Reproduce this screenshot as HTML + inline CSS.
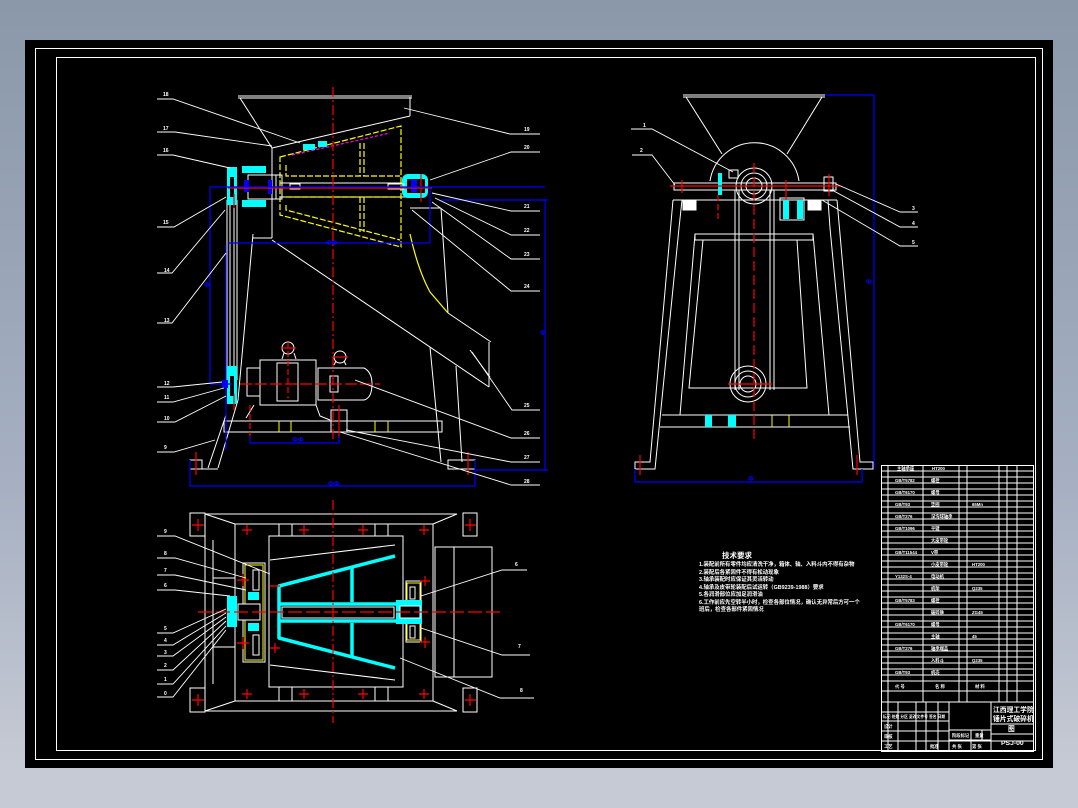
<!DOCTYPE html>
<html><head><meta charset="utf-8"><style>
html,body{margin:0;padding:0;width:1078px;height:808px;overflow:hidden;background:linear-gradient(#8a98aa,#a6b0c2 60%,#c6cad4 95%);}
svg{position:absolute;left:0;top:0}
text{font-family:"Liberation Sans","Noto Sans CJK SC",sans-serif;fill:#fff;font-weight:bold}
</style></head><body>
<svg width="1078" height="808" viewBox="0 0 1078 808">
<rect x="25" y="40" width="1028" height="728" fill="#000"/>
<g fill="none" stroke="#fff" stroke-width="1">
<rect x="35.5" y="48.5" width="1007" height="711"/>
<rect x="56.5" y="57.5" width="979" height="693"/>
</g>

<!-- FRONT VIEW -->
<g fill="none" stroke="#fff" stroke-width="1">
<line x1="238" y1="96" x2="412" y2="96"/><line x1="238" y1="98" x2="412" y2="98"/>
<line x1="240" y1="98" x2="272" y2="148"/>
<line x1="410" y1="97" x2="410" y2="116"/>
<line x1="272" y1="148" x2="410" y2="116"/>
<line x1="272" y1="148" x2="272" y2="238"/>
<line x1="272" y1="238" x2="253" y2="238"/>
<line x1="253" y1="234" x2="238" y2="400"/>
<line x1="238" y1="400" x2="218" y2="468"/>
<line x1="226" y1="415" x2="208" y2="468"/>
<line x1="227" y1="200" x2="227" y2="380"/>
<line x1="230" y1="200" x2="230" y2="380"/>
<line x1="234" y1="200" x2="234" y2="380"/>
<line x1="237" y1="200" x2="237" y2="380"/>
<line x1="272" y1="240" x2="489" y2="387"/>
<line x1="489" y1="342" x2="489" y2="387"/>
<line x1="448" y1="313" x2="491" y2="342"/>
<line x1="441" y1="208" x2="448" y2="313"/>
<line x1="410" y1="208" x2="441" y2="208"/>
<line x1="430" y1="347" x2="441" y2="462"/>
<line x1="456" y1="366" x2="462" y2="462"/>
<line x1="470" y1="350" x2="490" y2="377"/>
<line x1="280" y1="183" x2="410" y2="183"/>
<line x1="280" y1="197" x2="410" y2="197"/>
<rect x="224" y="421" width="218" height="11"/>
<rect x="260" y="360" width="56" height="45"/>
<rect x="277" y="363" width="21" height="38"/>
<rect x="247" y="368" width="13" height="28"/>
<path d="M318 368 H364 Q372 372 372 384 Q372 398 364 400 H318 Z"/>
<rect x="330" y="376" width="8" height="16"/>
<circle cx="288" cy="348" r="6"/><circle cx="340" cy="357" r="6"/>
<path d="M282 359 L284 353 M294 353 L296 359 M334 365 L336 361 M344 361 L346 365"/>
<path d="M254 405 L246 418 M316 405 L320 416 L330 420"/>
<rect x="190" y="460" width="12" height="9"/>
<rect x="448" y="460" width="27" height="9"/>
<line x1="202" y1="469" x2="218" y2="469"/>
<rect x="331" y="410" width="16" height="22"/>
</g>
<g fill="none" stroke="#ff0" stroke-width="1.2" stroke-dasharray="6,2">
<path d="M280 157 L401 126 L401 247 L280 215 Z"/>
<path d="M286 165 L286 176 L400 176 M286 205 L286 210 L400 240 M286 197 L400 197"/>
<line x1="360" y1="143" x2="360" y2="176"/><line x1="364" y1="143" x2="364" y2="176"/>
<line x1="360" y1="197" x2="360" y2="232"/><line x1="364" y1="197" x2="364" y2="232"/>
<path d="M410 234 Q418 270 430 292 L448 313" stroke-dasharray="none"/>
</g>
<g stroke="#ff0" stroke-width="1"><line x1="279" y1="421" x2="279" y2="432"/><line x1="291" y1="421" x2="291" y2="432"/><line x1="375" y1="421" x2="375" y2="432"/><line x1="388" y1="421" x2="388" y2="432"/></g>
<g fill="#0ff">
<rect x="227" y="167" width="10" height="38"/>
<rect x="242" y="166" width="24" height="7"/><rect x="242" y="200" width="24" height="7"/>
<rect x="402" y="174" width="26" height="24" rx="6"/>
<rect x="227" y="366" width="10" height="38"/>
<rect x="303" y="144" width="12" height="6"/><rect x="318" y="141" width="9" height="6"/>
</g>
<g fill="#000"><rect x="407" y="179" width="18" height="14"/><rect x="230" y="177" width="4" height="20"/><rect x="230" y="376" width="4" height="20"/><rect x="248" y="175" width="14" height="23"/></g>
<g fill="none" stroke="#fff"><rect x="248" y="175" width="28" height="24"/><rect x="276" y="175" width="6" height="24"/><rect x="290" y="184" width="10" height="5"/><rect x="388" y="184" width="16" height="5"/></g>
<g fill="none" stroke="#f0f" stroke-width="1.2" stroke-dasharray="3,2"><line x1="292" y1="155" x2="390" y2="133"/></g>
<g fill="#00f"><rect x="244" y="180" width="5" height="12"/><rect x="268" y="180" width="4" height="14"/><rect x="411" y="180" width="6" height="12"/><rect x="222" y="380" width="6" height="8"/></g>
<g stroke="#f00" stroke-width="1.2">
<line x1="228" y1="188" x2="432" y2="188"/>
<line x1="333" y1="87" x2="333" y2="442" stroke-dasharray="10,3,2,3"/>
<line x1="240" y1="384" x2="380" y2="384" stroke-dasharray="12,3"/>
<line x1="234" y1="194" x2="234" y2="208"/><line x1="234" y1="394" x2="234" y2="410"/>
<line x1="421" y1="174" x2="421" y2="202"/>
<line x1="288" y1="342" x2="288" y2="398" stroke-dasharray="6,3"/>
<line x1="281" y1="348" x2="296" y2="348"/><line x1="333" y1="357" x2="348" y2="357"/>
<line x1="250" y1="405" x2="250" y2="440" stroke-dasharray="6,3"/>
<line x1="339" y1="405" x2="339" y2="438"/>
<line x1="196" y1="452" x2="196" y2="475"/><line x1="468" y1="452" x2="468" y2="475"/>
</g>
<g fill="none" stroke="#00f" stroke-width="1.2">
<line x1="210" y1="187" x2="545" y2="187"/>
<line x1="210" y1="187" x2="210" y2="384"/>
<line x1="210" y1="384" x2="232" y2="384"/>
<line x1="228" y1="243" x2="430" y2="243"/>
<line x1="430" y1="187" x2="430" y2="243"/>
<line x1="441" y1="200" x2="548" y2="200"/>
<line x1="545" y1="200" x2="545" y2="470"/>
<line x1="475" y1="470" x2="548" y2="470"/>
<line x1="226" y1="245" x2="226" y2="450"/>
<path d="M190 460 V486 H475 V460"/>
<path d="M250 436 V443 H339 V436"/>
</g>
<g font-size="7"><text x="326" y="245" style="fill:#00f">ΦΦ</text><text x="204" y="287" style="fill:#00f">Φ</text><text x="328" y="486" style="fill:#00f">ΦΦ</text><text x="292" y="442" style="fill:#00f">ΦΦ</text><text x="540" y="335" style="fill:#00f">Φ</text><text x="866" y="284" style="fill:#00f">Φ</text><text x="748" y="481" style="fill:#00f">Φ</text></g>
<g fill="none" stroke="#fff" stroke-width="0.9">
<path d="M157 99 H173 L300 143"/>
<path d="M157 132 H175 L272 146"/>
<path d="M157 155 H173 L230 168"/>
<path d="M157 227 H174 L226 197"/>
<path d="M157 273 H172 L225 210"/>
<path d="M157 323 H172 L226 253"/>
<path d="M157 387 H173 L222 382"/>
<path d="M157 402 H173 L224 388"/>
<path d="M157 422 H175 L226 396"/>
<path d="M157 452 H174 L215 440"/>
<path d="M404 108 L510 134 H540"/>
<path d="M430 180 L511 152 H540"/>
<path d="M432 193 L511 211 H540"/>
<path d="M435 198 L511 235 H540"/>
<path d="M432 202 L511 259 H540"/>
<path d="M412 210 L511 291 H540"/>
<path d="M472 352 L512 410 H540"/>
<path d="M355 380 L511 438 H540"/>
<path d="M346 430 L511 462 H540"/>
<path d="M340 432 L511 485 H540"/>
</g>
<g font-size="5">
<text x="163" y="96">18</text><text x="163" y="130">17</text><text x="163" y="152">16</text><text x="163" y="224">15</text><text x="164" y="272">14</text><text x="164" y="322">13</text><text x="164" y="385">12</text><text x="164" y="399">11</text><text x="164" y="420">10</text><text x="164" y="449">9</text>
<text x="524" y="131">19</text><text x="524" y="149">20</text><text x="524" y="208">21</text><text x="524" y="232">22</text><text x="524" y="256">23</text><text x="524" y="288">24</text><text x="524" y="407">25</text><text x="524" y="435">26</text><text x="524" y="459">27</text><text x="524" y="483">28</text>
</g>

<!-- SIDE VIEW -->
<g fill="none" stroke="#fff" stroke-width="1">
<line x1="683" y1="95" x2="825" y2="95"/><line x1="683" y1="97" x2="825" y2="97"/>
<line x1="686" y1="97" x2="722" y2="154"/><line x1="822" y1="97" x2="787" y2="154"/>
<path d="M710 181 A45 45 0 0 1 799 181"/>
<rect x="674" y="183" width="162" height="7"/>
<line x1="673" y1="200" x2="837" y2="200"/>
<path d="M673 200 L650 462 L635 462 L635 469 L655 469 L679 228 L682 200"/>
<path d="M837 200 L860 462 L873 462 L873 469 L853 469 L830 228 L828 200"/>
<path d="M695 234 H813 V240 H695 Z"/>
<path d="M695 234 L680 415 M703 240 L689 388 H807 L797 240 M813 234 L829 415"/>
<line x1="735" y1="190" x2="735" y2="390"/><line x1="739" y1="190" x2="739" y2="390"/>
<line x1="770" y1="190" x2="770" y2="390"/><line x1="774" y1="190" x2="774" y2="390"/>
<line x1="662" y1="415" x2="848" y2="415"/><line x1="660" y1="427" x2="850" y2="427"/>
<circle cx="754" cy="186" r="18"/><circle cx="754" cy="186" r="13"/><circle cx="754" cy="186" r="8"/>
<circle cx="748" cy="384" r="18"/><circle cx="748" cy="384" r="13"/><circle cx="748" cy="384" r="8"/>
<rect x="683" y="201" width="13" height="9" fill="#fff"/><rect x="808" y="201" width="13" height="9" fill="#fff"/>
<rect x="729" y="170" width="9" height="8"/><rect x="824" y="177" width="9" height="14"/>
<rect x="780" y="198" width="24" height="22"/>
</g>
<g fill="#0ff"><rect x="705" y="415" width="7" height="12"/><rect x="728" y="415" width="8" height="12"/><rect x="783" y="200" width="6" height="19"/><rect x="797" y="200" width="6" height="19"/><rect x="718" y="173" width="4" height="22"/></g>
<g stroke="#ff0"><line x1="772" y1="415" x2="772" y2="427"/><line x1="789" y1="415" x2="789" y2="427"/></g>
<g stroke="#f00" stroke-width="1.2">
<line x1="754" y1="163" x2="754" y2="440" stroke-dasharray="10,4"/>
<line x1="670" y1="186" x2="840" y2="186"/>
<line x1="728" y1="384" x2="772" y2="384"/>
<line x1="682" y1="180" x2="682" y2="193"/><line x1="718" y1="195" x2="718" y2="222" stroke-dasharray="6,3"/>
<line x1="786" y1="180" x2="786" y2="200"/><line x1="829" y1="174" x2="829" y2="196"/>
<line x1="640" y1="455" x2="640" y2="475"/><line x1="857" y1="455" x2="857" y2="475"/>
</g>
<g stroke="#00f" stroke-width="1.2" fill="none"><path d="M825 95 H874 V468"/><path d="M635 469 V482 H862 V469"/></g>
<g fill="none" stroke="#fff" stroke-width="0.9">
<path d="M631 129 H652 L733 172"/><path d="M632 155 H652 L675 185"/>
<path d="M836 184 L900 212 H918"/><path d="M832 190 L900 227 H918"/><path d="M822 200 L900 246 H918"/>
</g>
<g font-size="5"><text x="643" y="127">1</text><text x="640" y="152">2</text><text x="912" y="210">3</text><text x="912" y="225">4</text><text x="912" y="244">5</text></g>

<!-- TOP VIEW -->
<g fill="none" stroke="#fff" stroke-width="1">
<rect x="190" y="513" width="15" height="23"/><rect x="463" y="513" width="14" height="23"/>
<rect x="190" y="688" width="15" height="24"/><rect x="463" y="688" width="14" height="24"/>
<line x1="205" y1="514" x2="457" y2="514"/><line x1="205" y1="711" x2="457" y2="711"/>
<rect x="235" y="524" width="198" height="177"/>
<rect x="269" y="536" width="134" height="151"/>
<line x1="205" y1="536" x2="205" y2="688"/><line x1="213" y1="540" x2="213" y2="684"/>
<line x1="213" y1="578" x2="235" y2="578"/><line x1="213" y1="647" x2="235" y2="647"/>
<line x1="205" y1="514" x2="235" y2="524"/><line x1="457" y1="514" x2="433" y2="524"/>
<line x1="205" y1="711" x2="235" y2="701"/><line x1="457" y1="711" x2="433" y2="701"/>
<line x1="279" y1="524" x2="279" y2="536"/><line x1="292" y1="524" x2="292" y2="536"/><line x1="375" y1="524" x2="375" y2="536"/><line x1="388" y1="524" x2="388" y2="536"/>
<line x1="279" y1="687" x2="279" y2="701"/><line x1="292" y1="687" x2="292" y2="701"/><line x1="375" y1="687" x2="375" y2="701"/><line x1="388" y1="687" x2="388" y2="701"/>
<rect x="435" y="547" width="57" height="130"/><line x1="454" y1="547" x2="454" y2="677"/>
<rect x="243" y="563" width="22" height="99"/>
<rect x="406" y="581" width="15" height="61"/>
<line x1="270" y1="560" x2="395" y2="545"/><line x1="270" y1="665" x2="395" y2="680"/>
</g>
<g fill="none" stroke="#ff0"><rect x="245" y="565" width="18" height="95"/><rect x="407" y="583" width="13" height="57"/></g>
<g fill="none" stroke="#0ff" stroke-width="3.5" stroke-linejoin="round">
<path d="M395 556 L279 586 L279 638 L395 668"/>
<line x1="352" y1="567" x2="352" y2="602"/><line x1="352" y1="623" x2="352" y2="657"/>
<line x1="279" y1="604" x2="396" y2="604"/><line x1="279" y1="621" x2="396" y2="621"/>
</g>
<g fill="#0ff"><rect x="227" y="596" width="10" height="31"/><rect x="248" y="592" width="11" height="8"/><rect x="248" y="623" width="11" height="8"/><rect x="396" y="600" width="26" height="24"/></g>
<g fill="#000" stroke="#fff"><rect x="238" y="604" width="22" height="16"/><rect x="400" y="606" width="20" height="12"/><rect x="253" y="570" width="6" height="20"/><rect x="253" y="635" width="6" height="20"/><rect x="410" y="587" width="5" height="12"/><rect x="410" y="626" width="5" height="12"/><rect x="282" y="607" width="112" height="11"/></g>
<g stroke="#f00" stroke-width="1.2" fill="none">
<line x1="198" y1="612" x2="500" y2="612" stroke-dasharray="14,4"/>
<line x1="333" y1="500" x2="333" y2="723" stroke-dasharray="10,3,2,3"/>
<path d="M192 525 H204 M198 519 V531 M465 525 H476 M470 519 V531 M192 700 H204 M198 694 V706 M465 700 H476 M470 694 V706"/>
<path d="M242 530 H252 M247 525 V535 M299 530 H309 M304 525 V535 M358 530 H368 M363 525 V535 M419 530 H429 M424 525 V535"/>
<path d="M242 694 H252 M247 689 V699 M299 694 H309 M304 689 V699 M358 694 H368 M363 689 V699 M419 694 H429 M424 689 V699"/>
<path d="M237 580 H249 M243 574 V586 M237 643 H249 M243 637 V649 M270 586 H280 M270 648 H280 M275 643 V653 M420 581 H430 M425 576 V586 M420 642 H430 M425 637 V648"/>
</g>
<g fill="none" stroke="#fff" stroke-width="0.9">
<path d="M157 536 H175 L270 574"/><path d="M157 558 H175 L246 578"/><path d="M157 575 H175 L246 590"/><path d="M157 590 H175 L230 596"/>
<path d="M157 633 H173 L226 609"/><path d="M157 645 H173 L226 613"/><path d="M157 656 H173 L226 617"/><path d="M157 670 H173 L226 621"/><path d="M157 684 H173 L226 626"/><path d="M157 697 H173 L226 630"/>
<path d="M421 596 L502 570 H527"/><path d="M421 628 L502 655 H530"/><path d="M400 658 L500 698 H534"/>
</g>
<g font-size="5"><text x="164" y="533">9</text><text x="164" y="555">8</text><text x="164" y="572">7</text><text x="164" y="587">6</text><text x="164" y="630">5</text><text x="164" y="642">4</text><text x="164" y="654">3</text><text x="164" y="667">2</text><text x="164" y="681">1</text><text x="164" y="695">0</text><text x="515" y="566">6</text><text x="518" y="648">7</text><text x="520" y="692">8</text></g>

<!-- technical requirements -->
<g font-size="5.4">
<text x="722" y="558" font-size="7.5">技术要求</text>
<text x="699" y="566">1.装配前所有零件均应清洗干净，箱体、轴、入料斗内不得有杂物</text>
<text x="699" y="574">2.装配后各紧固件不得有松动现象</text>
<text x="699" y="581">3.轴承装配时应保证其灵活转动</text>
<text x="699" y="589">4.轴承及皮带轮装配后试运转（GB9239-1988）要求</text>
<text x="699" y="596">5.各润滑部位应加足润滑油</text>
<text x="699" y="604">6.工作前应先空转半小时，检查各部位情况，确认无异常后方可一个</text>
<text x="699" y="611">班后，检查各部件紧固情况</text>
</g>

<!-- title block -->
<g fill="none" stroke="#fff" stroke-width="1">
<rect x="881.5" y="465.5" width="152" height="286"/>
<path d="M888 465 V702 M923 465 V702 M959 465 V702 M967 465 V702 M999 465 V702 M1007 465 V702 M1017 465 V702"/>
<path d="M881 471H1033M881 477H1033M881 483H1033M881 489H1033M881 495H1033M881 501H1033M881 507H1033M881 513H1033M881 519H1033M881 525H1033M881 531H1033M881 537H1033M881 543H1033M881 549H1033M881 555H1033M881 561H1033M881 567H1033M881 573H1033M881 579H1033M881 585H1033M881 591H1033M881 597H1033M881 603H1033M881 609H1033M881 615H1033M881 621H1033M881 627H1033M881 633H1033M881 639H1033M881 645H1033M881 651H1033M881 657H1033M881 663H1033M881 669H1033M881 675H1033M881 681H1033M881 691H1033M881 702H1033"/>
<path d="M881 712H949M881 721H949M881 731H949M881 741H1033M949 730H991M949 740H991M991 724H1033M991 734H1033"/>
<path d="M888 702V751M898 702V751M916 702V751M926 702V751M938 702V751M949 702V751M991 702V751M971 730V751M982 730V740"/>
</g>
<g font-size="4.3">
<text x="897" y="470">主轴承座</text><text x="932" y="470">HT200</text>
<text x="895" y="482">GB/T5782</text><text x="931" y="482">螺栓</text><text x="895" y="494">GB/T6170</text><text x="931" y="494">螺母</text>
<text x="895" y="506">GB/T93</text><text x="931" y="506">垫圈</text><text x="972" y="506">65Mn</text>
<text x="895" y="518">GB/T276</text><text x="931" y="518">深沟球轴承</text><text x="895" y="530">GB/T1096</text><text x="931" y="530">平键</text>
<text x="931" y="542">大皮带轮</text><text x="895" y="554">GB/T11544</text><text x="931" y="554">V带</text><text x="931" y="566">小皮带轮</text><text x="972" y="566">HT200</text>
<text x="895" y="578">Y132S-4</text><text x="931" y="578">电动机</text><text x="931" y="590">机架</text><text x="972" y="590">Q235</text>
<text x="895" y="602">GB/T5783</text><text x="931" y="602">螺栓</text><text x="931" y="614">破碎锥</text><text x="972" y="614">ZG45</text>
<text x="895" y="626">GB/T6170</text><text x="931" y="626">螺母</text><text x="931" y="638">主轴</text><text x="972" y="638">45</text>
<text x="895" y="650">GB/T276</text><text x="931" y="650">轴承端盖</text><text x="931" y="662">入料斗</text><text x="972" y="662">Q235</text>
<text x="895" y="674">GB/T93</text><text x="931" y="674">机壳</text><text x="895" y="688">代 号</text><text x="935" y="688">名 称</text><text x="975" y="688">材 料</text>
<text x="883" y="718" font-size="3.8">标记 处数 分区 更改文件号 签名 日期</text><text x="884" y="728">设计</text><text x="884" y="738">审核</text><text x="884" y="748">工艺</text><text x="930" y="748">批准</text>
<text x="952" y="737">阶段标记</text><text x="975" y="737">重量</text><text x="952" y="748">共 张</text><text x="972" y="748">第 张</text>
</g>
<g font-size="6.8"><text x="993" y="712">江西理工学院</text><text x="993" y="721">锤片式破碎机</text><text x="1008" y="731">图</text><text x="1001" y="745">PSJ-00</text></g>
</svg>
</body></html>
